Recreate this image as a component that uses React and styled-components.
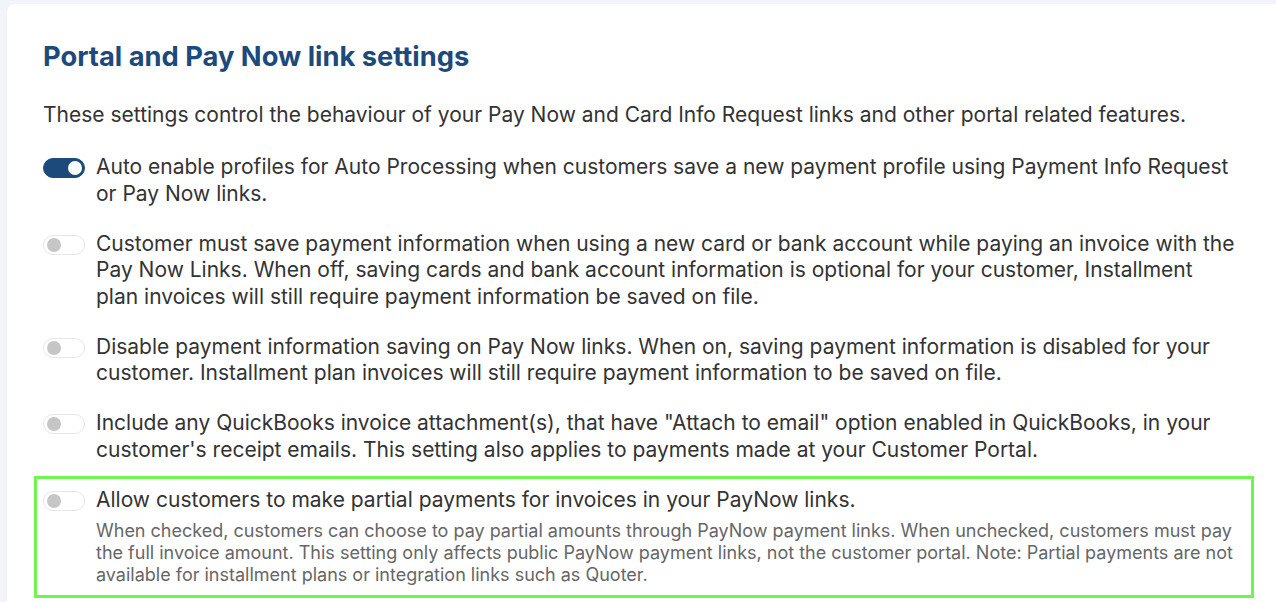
import React from "react";
import styled, { createGlobalStyle } from "styled-components";

const GlobalStyle = createGlobalStyle`
  html, body {
    margin: 0;
    padding: 0;
    background: #f1f4f8;
    font-family: Inter, "Noto Sans", sans-serif;
    overflow: hidden;
  }
`;

const Card = styled.div`
  margin: 4px 0 0 7px;
  width: 1300px;
  min-height: 620px;
  background: #fff;
  border-radius: 8px;
  padding: 37px 0 0 36px;
  box-sizing: border-box;
`;

const Content = styled.div`
  width: 1194px;
`;

const Title = styled.h2`
  margin: 0 0 29px;
  font-size: 27.3px;
  line-height: 32px;
  font-weight: 700;
  color: #1b4a7b;
`;

const Intro = styled.p`
  margin: 0 0 26px;
  font-size: 21px;
  line-height: 26px;
  color: #333;
`;

const List = styled.div`
  display: flex;
  flex-direction: column;
  gap: 23.5px;
`;

const Row = styled.div`
  display: flex;
  align-items: flex-start;
  gap: 11px;
  ${({ $highlight }) =>
    $highlight &&
    `
    margin: -11px -17px -12px -9px;
    padding: 8px 14px 9px 6px;
    border: 3px solid #6ff54c;
  `}
`;

const Track = styled.span`
  flex: none;
  position: relative;
  width: 42px;
  height: 20px;
  margin-top: 4px;
  border-radius: 10px;
  box-sizing: border-box;
  background: ${({ $on }) => ($on ? "#1b4a7b" : "#fff")};
  border: 1px solid ${({ $on }) => ($on ? "#1b4a7b" : "#e6e6e6")};
`;

const Knob = styled.span`
  position: absolute;
  top: 2px;
  left: ${({ $on }) => ($on ? "24px" : "3px")};
  width: 14px;
  height: 14px;
  border-radius: 50%;
  background: ${({ $on }) => ($on ? "#fff" : "#c6c6c6")};
`;

const Body = styled.div`
  flex: 1;
  min-width: 0;
`;

const Label = styled.div`
  font-size: 21px;
  line-height: 26.5px;
  color: #333;
`;

const Help = styled.div`
  margin-top: 7px;
  font-size: 18px;
  line-height: 22px;
  color: #666;
`;

const Toggle = ({ on }) => (
  <Track $on={on}>
    <Knob $on={on} />
  </Track>
);

const settings = [
  {
    on: true,
    label:
      "Auto enable profiles for Auto Processing when customers save a new payment profile using Payment Info Request or Pay Now links.",
  },
  {
    label:
      "Customer must save payment information when using a new card or bank account while paying an invoice with the Pay Now Links. When off, saving cards and bank account information is optional for your customer, Installment plan invoices will still require payment information be saved on file.",
  },
  {
    label:
      "Disable payment information saving on Pay Now links. When on, saving payment information is disabled for your customer. Installment plan invoices will still require payment information to be saved on file.",
  },
  {
    label:
      'Include any QuickBooks invoice attachment(s), that have "Attach to email" option enabled in QuickBooks, in your customer\'s receipt emails. This setting also applies to payments made at your Customer Portal.',
  },
  {
    highlight: true,
    label: "Allow customers to make partial payments for invoices in your PayNow links.",
    help:
      "When checked, customers can choose to pay partial amounts through PayNow payment links. When unchecked, customers must pay the full invoice amount. This setting only affects public PayNow payment links, not the customer portal. Note: Partial payments are not available for installment plans or integration links such as Quoter.",
  },
];

const App = () => (
  <>
    <GlobalStyle />
    <Card>
      <Content>
        <Title>Portal and Pay Now link settings</Title>
        <Intro>
          These settings control the behaviour of your Pay Now and Card Info Request links and other
          portal related features.
        </Intro>
        <List>
          {settings.map((s, i) => (
            <Row key={i} $highlight={s.highlight}>
              <Toggle on={s.on} />
              <Body>
                <Label>{s.label}</Label>
                {s.help && <Help>{s.help}</Help>}
              </Body>
            </Row>
          ))}
        </List>
      </Content>
    </Card>
  </>
);

export default App;
